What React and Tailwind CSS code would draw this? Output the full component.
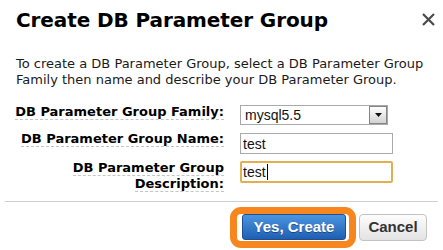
import React from "react";

const fields = [
  { key: "name", label: "DB Parameter Group Name:", value: "test", h: "h-[21px]", gap: "mt-[8px]", lift: "-mt-[2px]" },
];

function Label({ children, lift }) {
  return (
    <div className={`w-[208px] shrink-0 flex justify-end text-right ${lift}`}>
      <span className="whitespace-nowrap">
        <span className="border-b border-dashed border-[#c4c4c4]">{children}</span>
      </span>
    </div>
  );
}

export default function App() {
  return (
    <div className="w-[443px] h-[250px] bg-white overflow-hidden font-['DejaVu_Sans',Verdana,sans-serif] text-black">
      {/* Header */}
      <div className="flex justify-between items-start pl-[16px] pr-[8px] pt-[8px]">
        <h1 className="text-[20px] leading-[24px] font-bold tracking-[-0.1px]">Create DB Parameter Group</h1>
        <svg width="13" height="13" viewBox="0 0 13 13" className="mt-[5px]">
          <path d="M1 1 L12 12 M12 1 L1 12" stroke="#4a4a4a" strokeWidth="2.2" />
        </svg>
      </div>

      {/* Intro */}
      <p className="mt-[24px] px-[16px] text-[13px] leading-[16px] text-[#1a1a1a]">
        To create a DB Parameter Group, select a DB Parameter Group Family then name and describe your DB Parameter Group.
      </p>

      {/* Form */}
      <div className="mt-[17px] pl-[16px] text-[13px] leading-[16px] font-bold">
        <div className="flex items-start">
          <Label lift="-mt-px">DB Parameter Group Family:</Label>
          <div className="ml-[16px] w-[148px] h-[20px] border border-[#a9a9a9] flex items-center font-normal font-['Liberation_Sans',Arial,sans-serif] text-[14px] text-[#111]">
            <span className="flex-1 pl-[4px] leading-none">mysql5.5</span>
            <div className="w-[18px] h-[18px] border border-[#858585] bg-gradient-to-b from-white to-[#d2d2d2] flex items-center justify-center">
              <svg width="7" height="4" viewBox="0 0 7 4"><path d="M0 0 H7 L3.5 4 Z" fill="#111" /></svg>
            </div>
          </div>
        </div>

        {fields.map(f => (
          <div key={f.key} className={`flex items-start ${f.gap}`}>
            <Label lift={f.lift}>{f.label}</Label>
            <div className={`ml-[16px] w-[153px] ${f.h} border border-[#a9a9a9] flex items-center pl-[2px] font-normal font-['Liberation_Sans',Arial,sans-serif] text-[14px] text-[#111]`}>
              {f.value}
            </div>
          </div>
        ))}

        <div className="flex items-start mt-[7px] h-[22px]">
          <Label lift="-mt-px">DB Parameter Group<br />Description:</Label>
          <div className="ml-[16px] w-[153px] h-[22px] border-2 border-[#e2b04f] rounded-[2px] flex items-center pl-[1px] font-normal font-['Liberation_Sans',Arial,sans-serif] text-[14px] text-[#111]">
            test<span className="ml-px w-px h-[16px] bg-black" />
          </div>
        </div>
      </div>

      {/* Footer */}
      <div className="mt-[18px] mx-[5px] border-t border-[#cfcfcf]" />
      <div className="flex justify-end items-start pt-[12px] pr-[16px] gap-[13px] font-['Liberation_Sans',Arial,sans-serif] text-[15px] font-bold">
        <div className="relative">
          <button className="w-[104px] h-[26px] rounded-[3px] border border-[#1c4f94] bg-gradient-to-b from-[#4b95e0] to-[#1f5fb3] text-white [text-shadow:0_1px_0_rgba(0,0,0,0.35)]">
            Yes, Create
          </button>
          <div className="absolute -left-[12px] -top-[7px] -right-[10px] -bottom-[8px] border-[7px] border-[#f6861d] rounded-[11px]" />
        </div>
        <button className="w-[68px] h-[27px] rounded-[4px] border border-[#c3c3c3] bg-gradient-to-b from-[#fdfdfd] to-[#e3e3e3] text-[#333]">
          Cancel
        </button>
      </div>
    </div>
  );
}
